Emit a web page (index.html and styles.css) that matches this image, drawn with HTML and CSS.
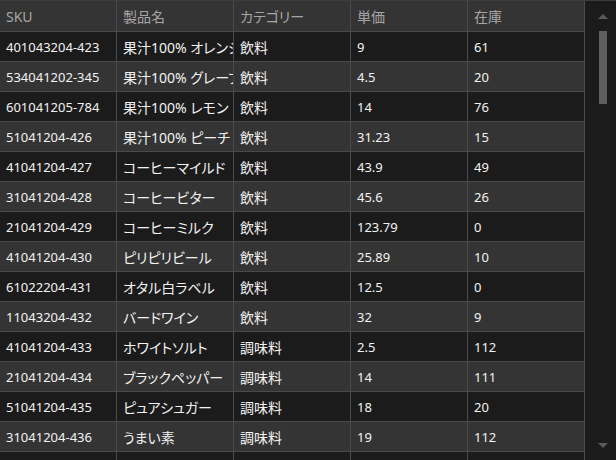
FILE: index.html
```html
<!DOCTYPE html>
<html lang="ja">
<head>
<meta charset="utf-8">
<link rel="stylesheet" href="styles.css">
</head>
<body>
<div class="grid-wrap">
  <div class="grid">
    <div class="row head">
      <div class="cell">SKU</div><div class="cell">製品名</div><div class="cell">カテゴリー</div><div class="cell">単価</div><div class="cell">在庫</div>
    </div>
    <div class="row odd"><div class="cell num">401043204-423</div><div class="cell">果汁100% オレンジ</div><div class="cell">飲料</div><div class="cell num">9</div><div class="cell num">61</div></div>
    <div class="row even"><div class="cell num">534041202-345</div><div class="cell">果汁100% グレープ</div><div class="cell">飲料</div><div class="cell num">4.5</div><div class="cell num">20</div></div>
    <div class="row odd"><div class="cell num">601041205-784</div><div class="cell">果汁100% レモン</div><div class="cell">飲料</div><div class="cell num">14</div><div class="cell num">76</div></div>
    <div class="row even"><div class="cell num">51041204-426</div><div class="cell">果汁100% ピーチ</div><div class="cell">飲料</div><div class="cell num">31.23</div><div class="cell num">15</div></div>
    <div class="row odd"><div class="cell num">41041204-427</div><div class="cell">コーヒーマイルド</div><div class="cell">飲料</div><div class="cell num">43.9</div><div class="cell num">49</div></div>
    <div class="row even"><div class="cell num">31041204-428</div><div class="cell">コーヒービター</div><div class="cell">飲料</div><div class="cell num">45.6</div><div class="cell num">26</div></div>
    <div class="row odd"><div class="cell num">21041204-429</div><div class="cell">コーヒーミルク</div><div class="cell">飲料</div><div class="cell num">123.79</div><div class="cell num">0</div></div>
    <div class="row even"><div class="cell num">41041204-430</div><div class="cell">ピリピリビール</div><div class="cell">飲料</div><div class="cell num">25.89</div><div class="cell num">10</div></div>
    <div class="row odd"><div class="cell num">61022204-431</div><div class="cell">オタル白ラベル</div><div class="cell">飲料</div><div class="cell num">12.5</div><div class="cell num">0</div></div>
    <div class="row even"><div class="cell num">11043204-432</div><div class="cell">バードワイン</div><div class="cell">飲料</div><div class="cell num">32</div><div class="cell num">9</div></div>
    <div class="row odd"><div class="cell num">41041204-433</div><div class="cell">ホワイトソルト</div><div class="cell">調味料</div><div class="cell num">2.5</div><div class="cell num">112</div></div>
    <div class="row even"><div class="cell num">21041204-434</div><div class="cell">ブラックペッパー</div><div class="cell">調味料</div><div class="cell num">14</div><div class="cell num">111</div></div>
    <div class="row odd"><div class="cell num">51041204-435</div><div class="cell">ピュアシュガー</div><div class="cell">調味料</div><div class="cell num">18</div><div class="cell num">20</div></div>
    <div class="row even"><div class="cell num">31041204-436</div><div class="cell">うまい素</div><div class="cell">調味料</div><div class="cell num">19</div><div class="cell num">112</div></div>
    <div class="row odd"><div class="cell num">61041204-437</div><div class="cell">醤油</div><div class="cell">調味料</div><div class="cell num">12</div><div class="cell num">45</div></div>
  </div>
  <div class="vscroll">
    <div class="arrow up"></div>
    <div class="track"><div class="thumb"></div></div>
    <div class="arrow down"></div>
  </div>
</div>
</body>
</html>
```

FILE: styles.css
```css
html, body {
  margin: 0;
  padding: 0;
  background: #1b1b1b;
}
.grid-wrap {
  width: 616px;
  height: 460px;
  overflow: hidden;
  display: flex;
  box-sizing: border-box;
  border-top: 1px solid #3c3c3c;
  background: #1b1b1b;
  font-family: "Noto Sans", "Noto Sans CJK JP", sans-serif;
  font-size: 14px;
  font-feature-settings: "palt";
}
.grid {
  width: 585px;
  flex: none;
  display: flex;
  flex-direction: column;
}
.row {
  display: flex;
  height: 29px;
  flex: none;
  border-bottom: 1px solid #4a4a4a;
}
.row.head {
  height: 30px;
  background: #343434;
  color: #a6a6a6;
}
.row.odd { background: #1b1b1b; color: #f2f2f2; }
.row.even { background: #343434; color: #f2f2f2; }
.cell {
  flex: none;
  border-right: 1px solid #4a4a4a;
  padding: 0 0 0 6px;
  width: 110px;
  display: flex;
  align-items: center;
  white-space: nowrap;
  overflow: hidden;
}
.cell.num {
  font-size: 13px;
}
.vscroll {
  width: 31px;
  flex: none;
  display: flex;
  flex-direction: column;
  align-items: center;
  background: #1b1b1b;
}
.arrow {
  width: 0;
  height: 0;
  border-left: 5px solid transparent;
  border-right: 5px solid transparent;
  margin-left: 5px;
}
.arrow.up {
  border-bottom: 5px solid #5a5a5a;
  margin-top: 13px;
  margin-bottom: 12px;
}
.arrow.down {
  border-top: 5px solid #5a5a5a;
  margin-top: 6px;
  margin-bottom: 12px;
}
.track {
  flex: 1;
  width: 8px;
  margin-left: 5px;
}
.thumb {
  width: 8px;
  height: 73px;
  background: #5e5e5e;
}
```
